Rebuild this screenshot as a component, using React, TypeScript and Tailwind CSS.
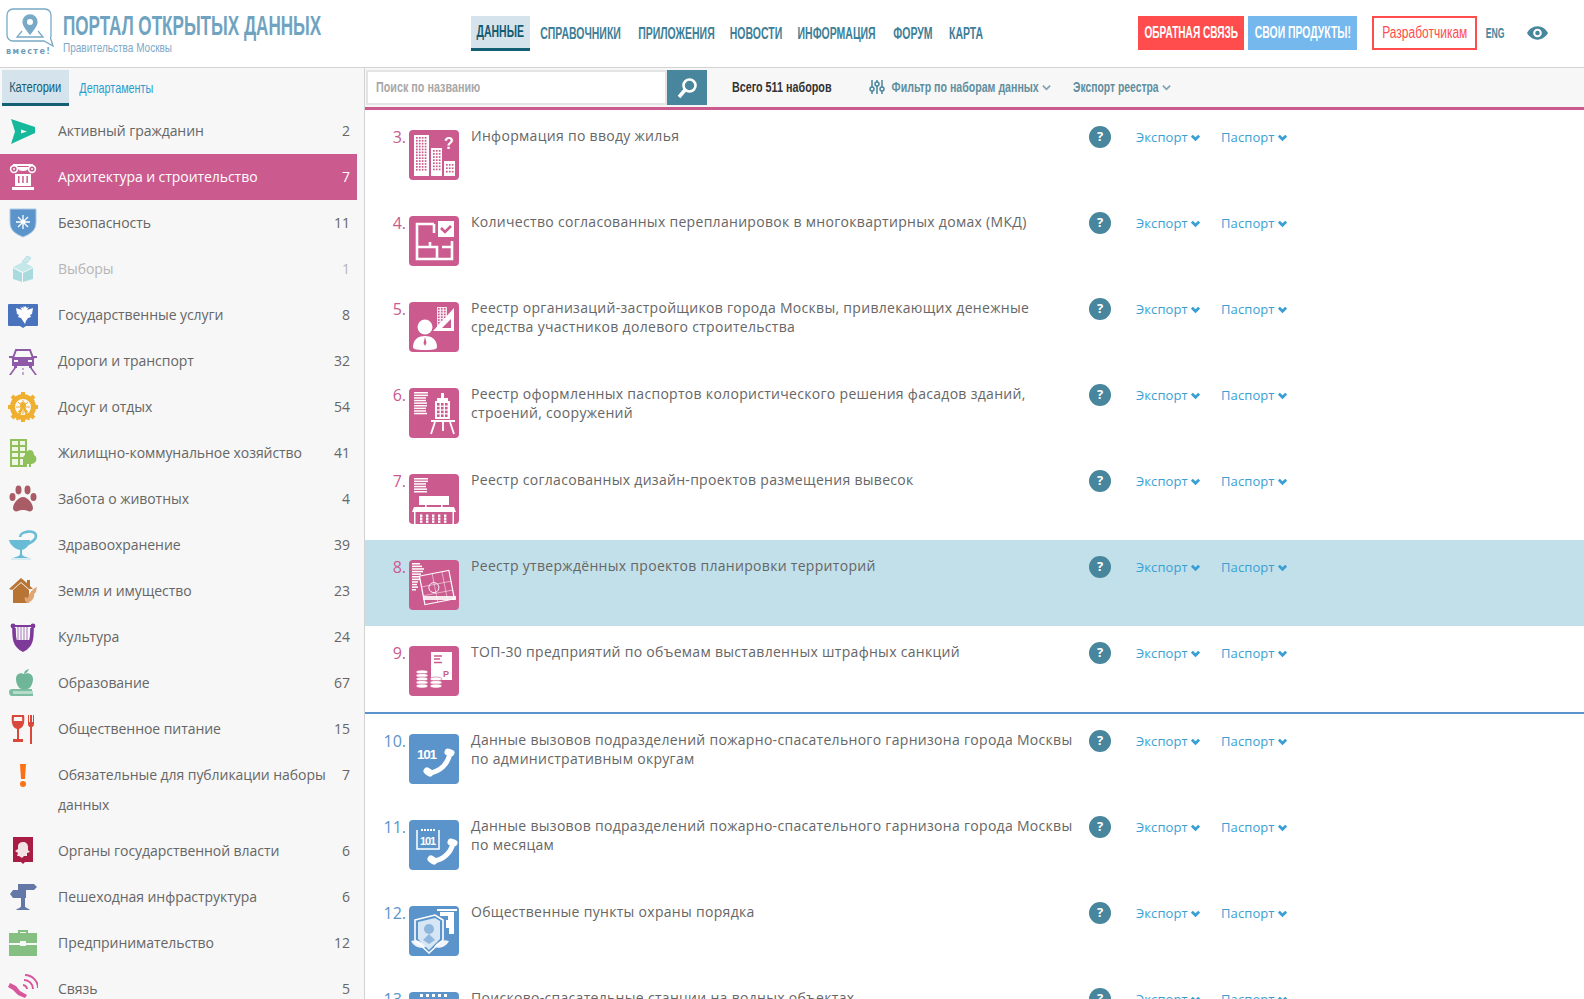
import React from "react";

const Chev = ({ c = "#3a9fd4", w = 3 }: { c?: string; w?: number }) => (
  <svg viewBox="0 0 10 10" className="ml-[3px] inline-block h-[9px] w-[9px] shrink-0" fill="none" stroke={c} strokeWidth={w}>
    <path d="M1 3l4 4 4-4" />
  </svg>
);

const Grid = ({ x, y, cols, rows, dx = 2.6, dy = 2.6, s = 1.6, fill = "#fff" }: any) => (
  <>
    {Array.from({ length: rows }).map((_, r) =>
      Array.from({ length: cols }).map((_, c) => (
        <rect key={`${r}-${c}`} x={x + c * dx} y={y + r * dy} width={s} height={s} fill={fill} />
      ))
    )}
  </>
);
const Lines = ({ x = 5, y = 4, ws = [14, 14, 13, 13, 12, 14] }: any) => (
  <>
    {ws.map((w: number, i: number) => (
      <rect key={i} x={x} y={y + i * 2.6} width={w} height={1.5} fill="#fff" />
    ))}
  </>
);
const Handset = ({ d, a, b }: any) => (
  <g stroke="#fff" fill="none" strokeLinecap="round">
    <path d={d} strokeWidth={5} />
    <path d={a} strokeWidth={7} />
    <path d={b} strokeWidth={7} />
  </g>
);

const tiles: Record<string, React.ReactNode> = {
  t3: (
    <>
      <rect x="5" y="5" width="15" height="41" fill="#fff" />
      <rect x="22" y="18" width="11" height="28" fill="#fff" />
      <rect x="35" y="31" width="11" height="15" fill="#fff" />
      <Grid x={7} y={7} cols={4} rows={12} dx={2.9} dy={2.9} s={1.7} fill="#cb5a8e" />
      <Grid x={24} y={20} cols={3} rows={7} dx={2.9} dy={3.1} s={1.7} fill="#cb5a8e" />
      <Grid x={37} y={34} cols={3} rows={3} dx={2.9} dy={3.4} s={1.7} fill="#cb5a8e" />
      <text x="35" y="19" fontSize="16" fontWeight="700" fill="#fff" fontFamily="Liberation Sans">?</text>
    </>
  ),
  t4: (
    <>
      <path d="M25 8H8v35h35V25M8 31h8M21 31v-5M15 31h13v12M25 8v9M33 31h10" stroke="#fff" strokeWidth="2.6" fill="none" />
      <rect x="29" y="5" width="16" height="16" fill="#fff" />
      <path d="M32 12l4 4 6-6" stroke="#cb5a8e" strokeWidth="2.6" fill="none" />
    </>
  ),
  t5: (
    <>
      <circle cx="16" cy="25" r="7.5" fill="#fff" />
      <path d="M4 45c0-8 6-11 12-11s12 3 12 11c0 2-2 3-12 3S4 47 4 45z" fill="#fff" />
      <path d="M16 35l-1.500 6 1.500 3 1.500-3z" fill="#cb5a8e" />
      <rect x="28" y="5" width="10" height="20" fill="#fff" opacity=".85" />
      <Grid x={29} y={6} cols={3} rows={7} dx={3} dy={2.8} s={1.6} fill="#cb5a8e" />
      <path d="M45 6v23H24z" fill="#fff" />
      <path d="M42 17v9H33z" fill="#cb5a8e" />
    </>
  ),
  t6: (
    <>
      <Lines y={4} ws={[14, 14, 12, 12, 13, 13, 12, 12, 13]} />
      <rect x="32" y="5" width="3" height="5" fill="#fff" />
      <path d="M28 10h11v3H28z" fill="#fff" />
      <rect x="26" y="13" width="15" height="18" fill="#fff" />
      <Grid x={28} y={15} cols={3} rows={4} dx={4} dy={3.8} s={2.6} fill="#cb5a8e" />
      <rect x="22" y="32" width="24" height="2" fill="#fff" />
      <path d="M26 34l-4 12m19-12l4 12m-11-12v9" stroke="#fff" strokeWidth="1.8" />
    </>
  ),
  t7: (
    <>
      <Lines y={4} ws={[14, 14, 12, 12, 13, 13]} />
      <rect x="10" y="22" width="30" height="9" fill="#fff" />
      <rect x="16" y="31" width="1.6" height="2" fill="#fff" />
      <rect x="32" y="31" width="1.6" height="2" fill="#fff" />
      <path d="M5 33h40l2 5H3z" fill="#fff" />
      <rect x="5" y="38" width="1.5" height="12" fill="#fff" />
      <rect x="43.5" y="38" width="1.5" height="12" fill="#fff" />
      <Grid x={11} y={40.5} cols={5} rows={3} dx={6} dy={3} s={2.4} />
    </>
  ),
  t8: (
    <>
      <Lines x={3} y={3} ws={[8, 10, 12, 11, 9, 8, 8, 6, 5, 6, 4]} />
      <g transform="rotate(-11 28 28)" stroke="#fff" fill="none">
        <rect x="13" y="13" width="30" height="29" strokeWidth="1.2" />
        <path d="M13 24h30M26 13v29M36 13v29M13 33h30" strokeWidth=".6" opacity=".8" />
        <circle cx="25" cy="27" r="5" strokeWidth=".9" />
      </g>
      <rect x="14" y="36" width="33" height="4" fill="#fff" opacity=".85" />
    </>
  ),
  t9: (
    <>
      <rect x="22" y="6" width="21" height="28" fill="#fff" />
      <path d="M25 10h8M25 13h6M25 16.500h8" stroke="#cb5a8e" strokeWidth="1.4" />
      <text x="34" y="31" fontSize="9" fontWeight="700" fill="#cb5a8e" fontFamily="Liberation Sans">P</text>
      {[26, 29.5, 33, 36.5, 40].map((y) => (
        <ellipse key={y} cx="13" cy={y} rx="6" ry="2" fill="#fff" stroke="#cb5a8e" strokeWidth=".6" />
      ))}
      {[33, 36.5, 40].map((y) => (
        <ellipse key={y} cx="27" cy={y} rx="6" ry="2" fill="#fff" stroke="#cb5a8e" strokeWidth=".6" />
      ))}
    </>
  ),
  t10: (
    <>
      <text x="8" y="25" fontSize="13.5" fontWeight="700" fill="#fff" fontFamily="Liberation Sans" textLength="20">101</text>
      <Handset d="M20 39C31 38 39 30 41 19" a="M18 37l3 2" b="M39 18l3 1" />
    </>
  ),
  t11: (
    <>
      <path d="M8 10v19h22V10" stroke="#fff" strokeWidth="1.5" fill="none" />
      <Grid x={12} y={9} cols={5} rows={1} dx={3} dy={3} s={2} />
      <text x="11" y="25" fontSize="11" fontWeight="700" fill="#fff" fontFamily="Liberation Sans" textLength="16">101</text>
      <Handset d="M24 41C34 40 42 33 44 23" a="M22 39l3 2" b="M42 22l3 1" />
    </>
  ),
  t12: (
    <>
      <path d="M28 3h20v2H28zM31 6h14v4H31z" fill="#fff" />
      <path d="M39 10h6v18h-5v-6h-3v-8h2z" fill="#fff" />
      <path d="M6 14l20-5 8 5v20l-14 13L6 34z" fill="none" stroke="#fff" strokeWidth="1.6" />
      <path d="M9 16l17-4 5 3v18l-11 11L9 33z" fill="#d7e6f4" />
      <circle cx="20" cy="23" r="5" fill="#8fb6dc" />
      <path d="M20 28l-6 6 6 4 6-4z" fill="#8fb6dc" />
      <path d="M2 35c6-2 11 0 15 6-6 2-12 0-15-6zM40 35c-6-2-11 0-15 6 6 2 12 0 15-6z" fill="#fff" opacity=".9" />
    </>
  ),
  t13: <Grid x={11} y={2} cols={5} rows={1} dx={6} dy={3} s={3} />,
};

const Tile = ({ id, color }: { id: string; color: string }) => (
  <div className="h-[50px] w-[50px] shrink-0 rounded-[4px]" style={{ background: color }}>
    <svg viewBox="0 0 50 50" className="h-[50px] w-[50px]">
      {tiles[id]}
    </svg>
  </div>
);

const side: Record<string, React.ReactNode> = {
  ag: <path fillRule="evenodd" d="M3 3l24 8v6L3 28l4-12.500zM13 13.500l6 2-6 2z" fill="#17b99b" />,
  arch: (
    <g fill="#fff">
      <rect x="5" y="2" width="20" height="2" />
      <circle cx="6" cy="7" r="3.400" fill="none" stroke="#fff" strokeWidth="1.600" />
      <circle cx="24" cy="7" r="3.400" fill="none" stroke="#fff" strokeWidth="1.600" />
      <circle cx="6" cy="7" r="1" />
      <circle cx="24" cy="7" r="1" />
      <path d="M9 5c1 3 3 4 6 4s5-1 6-4z" />
      <rect x="7" y="12" width="16" height="12" />
      <rect x="10" y="14" width="1.500" height="7" fill="#cb5a8e" />
      <rect x="14.200" y="14" width="1.500" height="7" fill="#cb5a8e" />
      <rect x="18.400" y="14" width="1.500" height="7" fill="#cb5a8e" />
      <rect x="4" y="25" width="22" height="3" />
    </g>
  ),
  shield: (
    <>
      <path d="M2 1h26v13c0 9-6 12-13 15C8 26 2 23 2 14z" fill="#5b94ca" stroke="#a9c8e6" strokeWidth="1" />
      <path d="M15 7v14M8 14h14M10 9l10 10M20 9L10 19" stroke="#fff" strokeWidth="1.300" />
      <circle cx="15" cy="14" r="2.400" fill="#fff" />
    </>
  ),
  box: (
    <>
      <path d="M14 8l5-6 4 2-4 5z" fill="#cfeaec" stroke="#a8d8dc" strokeWidth=".8" />
      <path d="M5 13l10-5 10 5-10 5z" fill="#c4e8ea" />
      <path d="M5 14l9 5v9l-9-3zM25 14l-10 5v9l10-3z" fill="#a9dbde" />
    </>
  ),
  gov: (
    <>
      <path d="M0 5a1 1 0 011-1h28a1 1 0 011 1v20a1 1 0 01-1 1H18l-3 2-3-2H1a1 1 0 01-1-1z" fill="#4a73bd" />
      <path d="M15 9l2-3 2 2 2-1-2 3 6-2-1 6-2 1 1 2-3 1-2 3-1 3-2-3-2-3-3-1 1-2-2-1-1-6 6 2-2-3 2 1 2-2z" fill="#fff" />
    </>
  ),
  car: (
    <g fill="#8f5ba8">
      <path d="M8 4h14l3 8H5z" fill="none" stroke="#8f5ba8" strokeWidth="2" />
      <path d="M4 12h22v8H4z" />
      <path d="M1 10h4v2H1zM25 10h4v2h-4z" />
      <path d="M6 20h3v2H6zM21 20h3v2h-3z" />
      <path d="M6 22L1 29h2l5-7zM24 22l5 7h-2l-5-7z" />
      <path d="M14.500 22h1v2h-1zM14.500 26h1v3h-1z" />
      <rect x="6" y="14" width="4" height="2" fill="#f7f7f7" />
      <rect x="20" y="14" width="4" height="2" fill="#f7f7f7" />
    </g>
  ),
  gear: (
    <g>
      <circle cx="15" cy="15" r="10.500" fill="none" stroke="#efb02f" strokeWidth="5" />
      <path d="M15 0v6M15 24v6M0 15h6M24 15h6M4 4l4 4M26 4l-4 4M4 26l4-4M26 26l-4-4" stroke="#efb02f" strokeWidth="4" />
      <path d="M15 8v14M8 15h14M10 10l10 10M20 10L10 20" stroke="#efb02f" strokeWidth="1" />
      <path d="M15 13l-6 15M15 13l6 15" stroke="#efb02f" strokeWidth="2.400" />
      <circle cx="15" cy="13" r="3" fill="#efb02f" />
    </g>
  ),
  house: (
    <>
      <path d="M2 1h17v28H2z" fill="#8fc05a" />
      <path d="M4 3h6v4H4zM12 3h5v4h-5zM4 9h6v4H4zM12 9h5v4h-5zM4 15h6v4H4zM12 15h5v4h-5zM4 21h6v6H4zM12 21h3v6h-3z" fill="#f0f6e4" />
      <path d="M22 12c3 0 4 3 4 5 2 1 3 3 2 6-1 2-3 3-5 3v3h-2v-3c-3 0-6-2-6-5s2-4 3-5c0-2 2-4 4-4z" fill="#8fc05a" />
    </>
  ),
  paw: (
    <g fill="#a95c65">
      <path d="M15 13c5 0 10 7 10 11 0 3-3 4-5 3s-3-1-5-1-3 0-5 1-5 0-5-3c0-4 5-11 10-11z" />
      <ellipse cx="4.500" cy="13" rx="3" ry="4" />
      <ellipse cx="10.500" cy="6" rx="3" ry="4.400" />
      <ellipse cx="19.500" cy="6" rx="3" ry="4.400" />
      <ellipse cx="25.500" cy="13" rx="3" ry="4" />
    </g>
  ),
  med: (
    <g>
      <path d="M1 10h21c0 5-4 9-8 10v4c0 2 4 3 7 4H5c3-1 7-2 7-4v-4c-5-1-10-5-11-10z" fill="#68bcd6" />
      <path d="M12 7c0-6 16-8 16-1 0 4-4 6-8 8" fill="none" stroke="#68bcd6" strokeWidth="2.600" />
      <path d="M3 29h20" stroke="#b5dfeb" strokeWidth="1" />
    </g>
  ),
  land: (
    <>
      <path d="M1 13L13 2l6 5V4h3v6l3 3h-4L13 6 4 14z" fill="#b87434" />
      <path d="M5 14l8-7 8 7v13H5z" fill="#b87434" />
      <path d="M19 27c0-6 4-14 10-16-1 3 0 5-3 7 1 3-2 8-7 9z" fill="#dfa673" />
      <path d="M17 21c2 0 4 2 4 6-3 0-5-2-4-6z" fill="#dfa673" />
    </>
  ),
  lyre: (
    <g>
      <path d="M6 6c0 10 0 17 9 22 9-5 9-12 9-22" fill="none" stroke="#7d3a98" strokeWidth="3.600" />
      <circle cx="5" cy="4" r="2.400" fill="#7d3a98" />
      <circle cx="25" cy="4" r="2.400" fill="#7d3a98" />
      <rect x="6" y="3" width="18" height="2" fill="#7d3a98" />
      <path d="M10 5v14M13 5v16M16 5v16M19 5v14" stroke="#b48dc4" strokeWidth="1.200" />
      <path d="M8 18h14v3l-7 6-7-6z" fill="#7d3a98" />
    </g>
  ),
  edu: (
    <g>
      <path d="M16 6c4-2 9 0 9 5 0 5-3 10-6 10h-5c-3 0-6-5-6-10 0-5 4-7 8-5z" fill="#6fb597" />
      <path d="M16 6c0-3 2-4 5-5-1 2-2 4-5 5z" fill="#6fb597" />
      <path d="M1 24c0-2 1-3 3-3h20v2H5v3h20v2H4c-2 0-3-2-3-4z" fill="#7cbca0" />
      <rect x="5" y="23" width="20" height="3" fill="#b5dcc9" />
    </g>
  ),
  food: (
    <g>
      <path d="M4 1h12c1 6 0 13-5 14v10h4v3H5v-3h4V15C4 14 3 7 4 1z" fill="#d9483b" />
      <path d="M6 3h8l.3 4H5.700z" fill="#f7f7f7" />
      <path d="M20 1v9c0 2 1 3 2 3v17h2V13c1 0 2-1 2-3V1h-1v7h-1V1h-2v7h-1V1z" fill="#d9483b" />
    </g>
  ),
  warn: (
    <g fill="#f97316">
      <path d="M12 4h6l-1 15h-4z" />
      <circle cx="15" cy="24" r="3" />
    </g>
  ),
  crest: (
    <>
      <path d="M5 1h20v25H17l-2 2-2-2H5z" fill="#a91d44" />
      <path d="M15 6c3 0 5 2 5 5v3l2 2-3 1v3h-3l-2 2-3-2H9l1-3-3-2 3-2v-3c0-2 2-4 5-4z" fill="#f3e2e6" />
    </>
  ),
  sign: (
    <g fill="#6478a8">
      <path d="M10 2h16l3 3-3 3H10z" />
      <path d="M18 8H5l-3 4 3 4h13z" />
      <path d="M13 8h4v16c0 2 3 2 5 4H8c2-2 5-2 5-4z" />
    </g>
  ),
  case: (
    <g fill="#85bf82">
      <path d="M10 5V2h10v3h-2V4h-6v1z" />
      <rect x="1" y="5" width="28" height="10" />
      <rect x="1" y="17" width="28" height="11" />
      <rect x="12" y="13" width="6" height="5" fill="#f7f7f7" />
    </g>
  ),
  sat: (
    <g>
      <path d="M2 9l6 3 4 5 7 4-2 3-7-3-5-5-5-3z" fill="#d8569c" />
      <path d="M16 6c5 0 9 4 9 9M17 1c7 0 13 6 13 13M15 11c2 0 4 2 4 4" stroke="#d8569c" strokeWidth="2" fill="none" />
    </g>
  ),
};

const cats: [string, string, string, string?][] = [
  ["ag", "Активный гражданин", "2"],
  ["arch", "Архитектура и строительство", "7", "active"],
  ["shield", "Безопасность", "11"],
  ["box", "Выборы", "1", "dim"],
  ["gov", "Государственные услуги", "8"],
  ["car", "Дороги и транспорт", "32"],
  ["gear", "Досуг и отдых", "54"],
  ["house", "Жилищно-коммунальное хозяйство", "41"],
  ["paw", "Забота о животных", "4"],
  ["med", "Здравоохранение", "39"],
  ["land", "Земля и имущество", "23"],
  ["lyre", "Культура", "24"],
  ["edu", "Образование", "67"],
  ["food", "Общественное питание", "15"],
  ["warn", "Обязательные для публикации наборы данных", "7"],
  ["crest", "Органы государственной власти", "6"],
  ["sign", "Пешеходная инфраструктура", "6"],
  ["case", "Предпринимательство", "12"],
  ["sat", "Связь", "5"],
];

const PINK = "#cb5a8e";
const BLUE = "#5b94ca";
const rows1: [string, string, string, boolean?][] = [
  ["3.", "t3", "Информация по вводу жилья"],
  ["4.", "t4", "Количество согласованных перепланировок в многоквартирных домах (МКД)"],
  ["5.", "t5", "Реестр организаций-застройщиков города Москвы, привлекающих денежные средства участников долевого строительства"],
  ["6.", "t6", "Реестр оформленных паспортов колористического решения фасадов зданий, строений, сооружений"],
  ["7.", "t7", "Реестр согласованных дизайн-проектов размещения вывесок"],
  ["8.", "t8", "Реестр утверждённых проектов планировки территорий", true],
  ["9.", "t9", "ТОП-30 предприятий по объемам выставленных штрафных санкций"],
];
const rows2: [string, string, string, boolean?][] = [
  ["10.", "t10", "Данные вызовов подразделений пожарно-спасательного гарнизона города Москвы по административным округам"],
  ["11.", "t11", "Данные вызовов подразделений пожарно-спасательного гарнизона города Москвы по месяцам"],
  ["12.", "t12", "Общественные пункты охраны порядка"],
  ["13.", "t13", "Поисково-спасательные станции на водных объектах"],
];

const Row = ({ n, id, text, hi, color }: any) => (
  <div className={`flex h-[86px] shrink-0 pt-[20px] ${hi ? "bg-[#c2e0ea]" : ""}`}>
    <div className="mt-[-4px] w-[44px] shrink-0 pr-[3px] text-right text-[16px] leading-[22px]" style={{ color }}>
      {n}
    </div>
    <Tile id={id} color={color} />
    <div className="ml-[12px] mt-[-4px] w-[606px] shrink-0 text-[14px] leading-[19px] tracking-[0.3px] text-[#666]">{text}</div>
    <div className="ml-[12px] mt-[-4px] flex h-[22px] w-[22px] shrink-0 items-center justify-center rounded-full bg-[#47869c] text-[13px] font-bold text-white">
      ?
    </div>
    <div className="ml-[25px] mt-[-2px] flex h-[19px] w-[85px] shrink-0 items-center text-[13px] tracking-[0.1px] text-[#3a9fd4]">
      Экспорт<Chev />
    </div>
    <div className="mt-[-2px] flex h-[19px] items-center text-[13px] tracking-[0.1px] text-[#3a9fd4]">
      Паспорт<Chev />
    </div>
  </div>
);

const N = "font-['Liberation_Sans',sans-serif]";
const NW = "inline-block shrink-0 whitespace-nowrap";

const navItems: [string, string][] = [
  ["СПРАВОЧНИКИ", "w-[96px]"],
  ["ПРИЛОЖЕНИЯ", "w-[94px]"],
  ["НОВОСТИ", "w-[66px]"],
  ["ИНФОРМАЦИЯ", "w-[96px]"],
  ["ФОРУМ", "w-[56px]"],
  ["КАРТА", "w-[51px]"],
];

export default function App() {
  return (
    <div className="flex h-[999px] w-[1584px] flex-col overflow-hidden bg-white font-['Open_Sans',sans-serif]">
      <header className="flex h-[68px] shrink-0 items-start border-b border-[#d2d2d2]">
        <div className="flex w-[471px] shrink-0">
          <div className="ml-[6px] mt-[8px] w-[48px]">
            <svg viewBox="0 0 48 40" className="h-[40px] w-[48px]" fill="none" stroke="#78a9c6" strokeWidth="1.300">
              <path d="M7 1h32a6 6 0 016 6v20a6 6 0 01-.5 3l2.500 8-9-5H7a6 6 0 01-6-6V7a6 6 0 016-6z" />
              <path d="M24 7a7 7 0 017 7c0 4-4 8-7 12-3-4-7-8-7-12a7 7 0 017-7z" fill="#78a9c6" />
              <circle cx="24" cy="14" r="3" fill="#fff" stroke="none" />
              <path d="M16 23l-5 6h26l-5-6" />
            </svg>
            <div className="mt-[-1px] font-['DejaVu_Sans',sans-serif] text-[8px] font-bold leading-[10px] tracking-[1.4px] text-[#6f9dba]">вместе!</div>
          </div>
          <div className="ml-[9px] mt-[11px] w-[260px]">
            <div className={`${N} flex h-[29px] items-center text-[28px] font-bold text-[#6fa3c0]`}>
              <span className={`${NW} origin-left scale-x-[0.61]`}>ПОРТАЛ ОТКРЫТЫХ ДАННЫХ</span>
            </div>
            <div className={`${N} h-[15px] text-[13px] leading-[15px] text-[#7ea9c8]`}>
              <span className={`${NW} origin-left scale-x-[0.77]`}>Правительства Москвы</span>
            </div>
          </div>
        </div>
        <nav className={`${N} mt-[16px] flex text-[16px] font-bold text-[#3e7f97]`}>
          <a className="mr-[3px] flex h-[35px] w-[59px] items-center justify-center border-b-[3px] border-[#145f73] bg-[#d5e4ec] text-[#145a70]">
            <span className={`${NW} scale-x-[0.655]`}>ДАННЫЕ</span>
          </a>
          {navItems.map(([t, w]) => (
            <a key={t} className={`flex h-[35px] items-center justify-center ${w}`}>
              <span className={`${NW} scale-x-[0.655]`}>{t}</span>
            </a>
          ))}
        </nav>
        <div className={`${N} ml-auto mr-[36px] mt-[16px] flex items-center`}>
          <a className="flex h-[34px] w-[106px] items-center justify-center bg-[#ff4d4d] text-[16px] font-bold text-white">
            <span className={`${NW} scale-x-[0.63]`}>ОБРАТНАЯ СВЯЗЬ</span>
          </a>
          <a className="ml-[4px] flex h-[34px] w-[109px] items-center justify-center bg-[#74b8ed] text-[16px] font-bold text-white">
            <span className={`${NW} scale-x-[0.65]`}>СВОИ ПРОДУКТЫ!</span>
          </a>
          <a className="ml-[15px] flex h-[34px] w-[105px] items-center justify-center border-2 border-[#ff4d4d] text-[16px] text-[#ff4d4d]">
            <span className={`${NW} scale-x-[0.75]`}>Разработчикам</span>
          </a>
          <span className="ml-[9px] flex w-[19px] justify-center text-[14px] font-bold text-[#47869c]">
            <span className={`${NW} scale-x-[0.62]`}>ENG</span>
          </span>
          <svg viewBox="0 0 22 14" className="ml-[22px] h-[14px] w-[21px]">
            <path fillRule="evenodd" d="M11 0c5 0 9 3.500 11 7-2 3.500-6 7-11 7S2 10.500 0 7c2-3.500 6-7 11-7zm0 2.500a4.500 4.500 0 100 9 4.500 4.500 0 000-9z" fill="#47869c" />
            <circle cx="11" cy="7" r="2.400" fill="#47869c" />
          </svg>
        </div>
      </header>
      <div className="flex min-h-0 flex-1">
        <aside className="w-[365px] shrink-0 overflow-hidden border-r border-[#d2d2d2] bg-[#f7f7f7]">
          <div className={`${N} ml-[2px] mt-[2px] flex h-[36px] text-[15px]`}>
            <a className="flex w-[67px] items-center justify-center border-b-[3px] border-[#145f73] bg-[#d5e4ec] pt-[1px] text-[#145a70]">
              <span className={`${NW} scale-x-[0.74]`}>Категории</span>
            </a>
            <a className="ml-[10px] flex w-[74px] items-center justify-center text-[#2a9dd0]">
              <span className={`${NW} scale-x-[0.72]`}>Департаменты</span>
            </a>
          </div>
          <div className="mt-[2px] w-[357px]">
            {cats.map(([ic, t, n, st]) => (
              <div key={t} className={`flex py-[8px] pl-[8px] pr-[7px] text-[14px] leading-[30px] ${st === "active" ? "bg-[#cb5a8e] text-white" : st === "dim" ? "text-[#b5b5b5]" : "text-[#666]"}`}>
                <svg viewBox="0 0 30 30" className="mr-[20px] h-[30px] w-[30px] shrink-0">{side[ic]}</svg>
                <div className="flex-1 pr-[8px] tracking-[-0.06px]">{t}</div>
                <div>{n}</div>
              </div>
            ))}
          </div>
        </aside>
        <main className="min-w-0 flex-1 overflow-hidden">
          <div className={`${N} flex h-[42px] items-start border-b-[3px] border-[#cb5a8e] bg-[#f7f7f7] pt-[2px] text-[14px] font-bold`}>
            <div className="ml-[1px] flex h-[35px] w-[301px] items-center border-2 border-[#e4e4e4] bg-white pl-[8px] text-[#a8a8a8]">
              <span className={`${NW} origin-left scale-x-[0.77]`}>Поиск по названию</span>
            </div>
            <div className="flex h-[35px] w-[40px] items-center justify-center bg-[#47869c]">
              <svg viewBox="0 0 24 24" className="h-[24px] w-[24px]" fill="none" stroke="#fff">
                <circle cx="14.500" cy="9.500" r="6" strokeWidth="2.600" />
                <path d="M10 14l-6 7" strokeWidth="3.500" />
              </svg>
            </div>
            <div className="ml-[26px] flex h-[35px] w-[98px] items-center justify-center text-[#333]">
              <span className={`${NW} scale-x-[0.77]`}>Всего 511 наборов</span>
            </div>
            <svg viewBox="0 0 16 16" className="ml-[38px] mt-[9px] h-[16px] w-[16px]" fill="none" stroke="#47869c" strokeWidth="1.500">
              <path d="M3 1v14M8 1v14M13 1v14" />
              <circle cx="3" cy="10" r="2" fill="#f7f7f7" />
              <circle cx="8" cy="5" r="2" fill="#f7f7f7" />
              <circle cx="13" cy="10" r="2" fill="#f7f7f7" />
            </svg>
            <div className="ml-[7px] flex h-[35px] w-[147px] items-center justify-center text-[#5f8f9f]">
              <span className={`${NW} scale-x-[0.757]`}>Фильтр по наборам данных</span>
            </div>
            <div className="flex h-[35px] items-center"><Chev c="#7fa5b2" w={2} /></div>
            <div className="ml-[21px] flex h-[35px] w-[87px] items-center justify-center text-[#5f8f9f]">
              <span className={`${NW} scale-x-[0.74]`}>Экспорт реестра</span>
            </div>
            <div className="flex h-[35px] items-center"><Chev c="#7fa5b2" w={2} /></div>
          </div>
          {rows1.map(([n, id, t, hi]) => (
            <Row key={n} n={n} id={id} text={t} hi={hi} color={PINK} />
          ))}
          <div className="h-[2px] bg-[#5b94ca]" />
          {rows2.map(([n, id, t, hi]) => (
            <Row key={n} n={n} id={id} text={t} hi={hi} color={BLUE} />
          ))}
        </main>
      </div>
    </div>
  );
}
